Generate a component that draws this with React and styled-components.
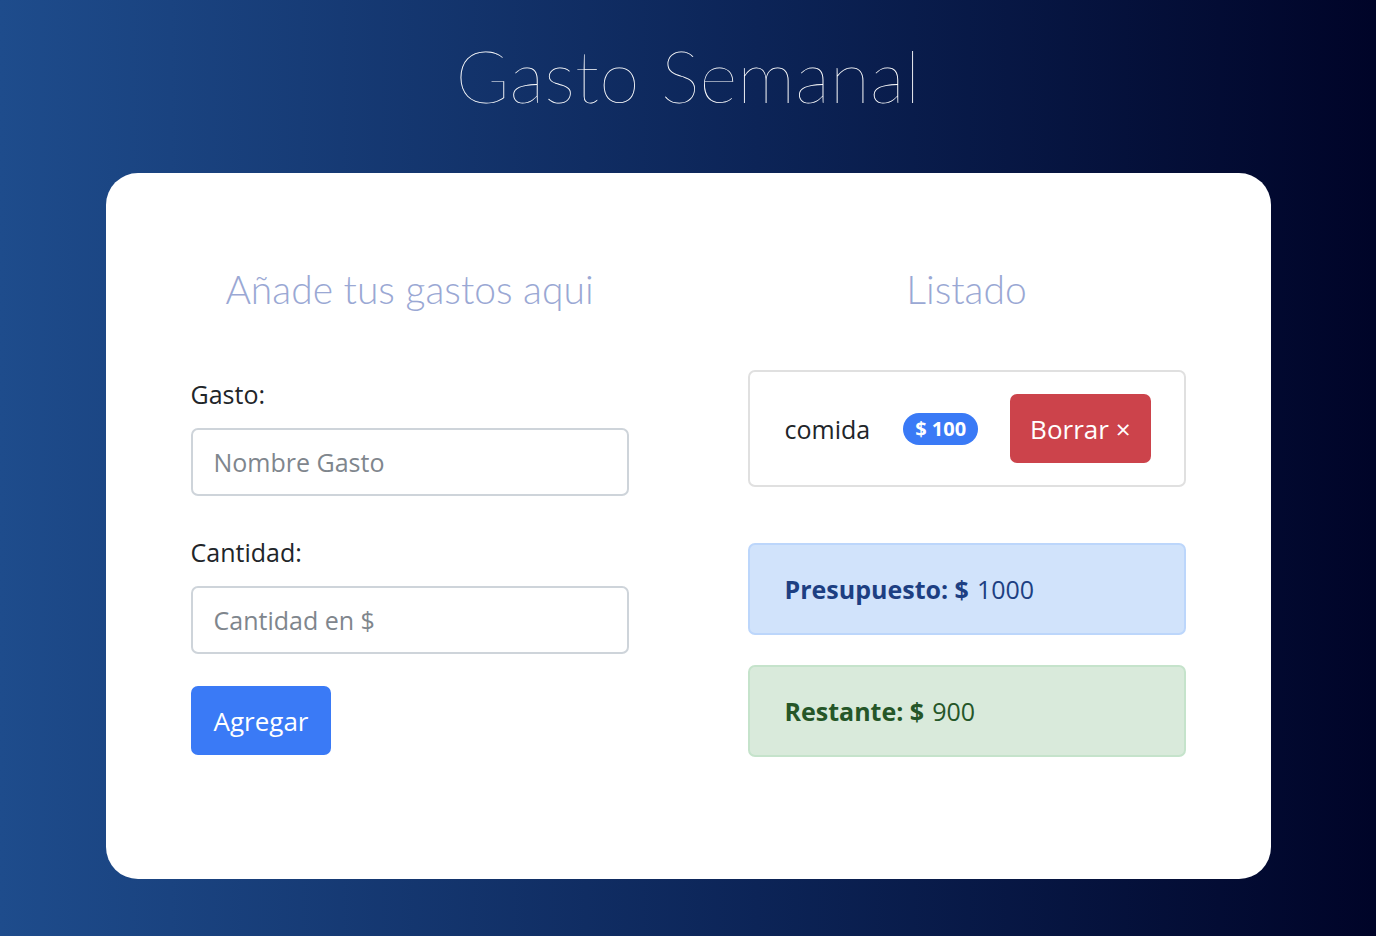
import React from 'react'
import styled, { createGlobalStyle } from 'styled-components'

const GlobalStyle = createGlobalStyle`
    html, body {
        margin: 0;
        padding: 0;
    }
    body {
        min-height: 100vh;
        background: linear-gradient(to right, #1e4c8c 0%, #0c2457 55%, #000428 100%);
        font-family: "Open Sans", "Noto Sans", sans-serif;
        color: #212529;
    }
    * {
        box-sizing: border-box;
    }
`

export default function App() {
    return (
        <>
            <GlobalStyle />
            <Page>
                <Title>Gasto Semanal</Title>
                <Card>
                    <Column>
                        <Heading>Añade tus gastos aqui</Heading>
                        <Form onSubmit={e => e.preventDefault()}>
                            <Field>
                                <Label>Gasto:</Label>
                                <Input type="text" placeholder="Nombre Gasto" />
                            </Field>
                            <Field>
                                <Label>Cantidad:</Label>
                                <Input type="number" placeholder="Cantidad en $" />
                            </Field>
                            <SubmitButton type="submit">Agregar</SubmitButton>
                        </Form>
                    </Column>
                    <Column>
                        <Heading>Listado</Heading>
                        <ListItem>
                            <ItemName>comida</ItemName>
                            <Badge>$ 100</Badge>
                            <DeleteButton>Borrar &times;</DeleteButton>
                        </ListItem>
                        <Alert variant="primary">
                            <strong>Presupuesto: $</strong> 1000
                        </Alert>
                        <Alert variant="success">
                            <strong>Restante: $</strong> 900
                        </Alert>
                    </Column>
                </Card>
            </Page>
        </>
    )
}

const alertColors = {
    primary: { bg: '#d1e3fb', border: '#bcd6fb', text: '#1d3f82' },
    success: { bg: '#d9eadb', border: '#c5e3cb', text: '#255628' },
}

const Page = styled.div`
    padding: 30px 0 58px;
`

const Title = styled.h1`
    margin: 0 0 53px;
    text-align: center;
    font-family: "Lato", "Open Sans", sans-serif;
    font-weight: 100;
    font-size: 73px;
    line-height: 90px;
    color: #ffffff;
    letter-spacing: 0.3px;
`

const Card = styled.div`
    width: 1165px;
    margin: 0 auto;
    background: #ffffff;
    border-radius: 32px;
    padding: 88px 85px 122px;
    display: grid;
    grid-template-columns: 438px 438px;
    justify-content: space-between;
`

const Column = styled.div`
    display: flex;
    flex-direction: column;
`

const Heading = styled.h2`
    margin: 0 0 52px;
    text-align: center;
    font-family: "Lato", "Open Sans", sans-serif;
    font-weight: 300;
    font-size: 39px;
    line-height: 56px;
    color: #9aa8d4;
`

const Form = styled.form`
    display: flex;
    flex-direction: column;
    margin-top: 4px;
`

const Field = styled.div`
    display: flex;
    flex-direction: column;
    margin-bottom: 35px;
`

const Label = styled.label`
    font-size: 25px;
    line-height: 42px;
    margin-bottom: 13px;
    color: #212529;
`

const Input = styled.input`
    height: 68px;
    width: 100%;
    padding: 0 21px;
    font-family: inherit;
    font-size: 25px;
    color: #495057;
    border: 2px solid #ced4da;
    border-radius: 7px;
    background: #fff;
    outline: none;
    -moz-appearance: textfield;
    &::placeholder {
        color: #7f868d;
    }
    &::-webkit-outer-spin-button,
    &::-webkit-inner-spin-button {
        -webkit-appearance: none;
        margin: 0;
    }
`

const SubmitButton = styled.button`
    align-self: flex-start;
    margin-top: -3px;
    height: 69px;
    padding: 0 23px;
    font-family: inherit;
    font-size: 26px;
    color: #ffffff;
    background: #3a7af6;
    border: none;
    border-radius: 7px;
    cursor: pointer;
`

const ListItem = styled.div`
    display: flex;
    align-items: center;
    height: 117px;
    padding: 0 20px 0 35px;
    border: 2px solid #e0e0e0;
    border-radius: 7px;
    margin-top: 1px;
    white-space: nowrap;
    & > * {
        flex-shrink: 0;
    }
`

const ItemName = styled.span`
    font-size: 25px;
    color: #212529;
`

const Badge = styled.span`
    margin-left: 33px;
    height: 32px;
    padding: 0 12px;
    display: inline-flex;
    align-items: center;
    border-radius: 16px;
    background: #3a7af6;
    color: #ffffff;
    font-weight: 700;
    font-size: 20px;
`

const DeleteButton = styled.button`
    margin-left: 32px;
    height: 69px;
    padding: 0 20px;
    font-family: inherit;
    font-size: 26px;
    color: #ffffff;
    background: #cc434b;
    border: none;
    border-radius: 7px;
    cursor: pointer;
    white-space: nowrap;
`

const Alert = styled.div`
    height: 92px;
    display: flex;
    align-items: center;
    gap: 8px;
    padding: 0 35px;
    margin-top: ${p => (p.variant === 'primary' ? '56px' : '30px')};
    font-size: 25px;
    background: ${p => alertColors[p.variant].bg};
    border: 2px solid ${p => alertColors[p.variant].border};
    color: ${p => alertColors[p.variant].text};
    border-radius: 7px;
    strong {
        font-weight: 700;
    }
`
